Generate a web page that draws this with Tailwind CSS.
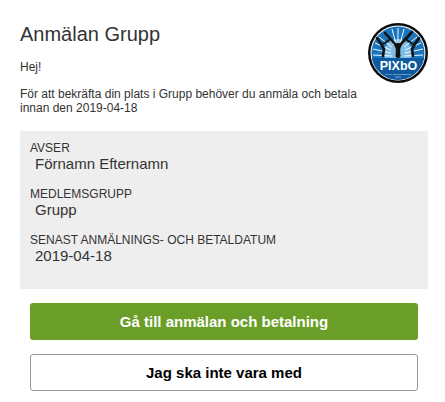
<!DOCTYPE html>
<html lang="en">
<head>
    <meta charset="UTF-8">
    <title>Anmälan Grupp</title>
    <script src="https://cdn.jsdelivr.net/npm/@tailwindcss/browser@4"></script>
</head>
<body class="bg-white font-['Liberation_Sans',Arial,sans-serif] text-[#333]">

<div class="pl-5 pr-[17px] pt-[20px] h-[402px] overflow-hidden">
    <div class="flex justify-between h-[111px]">
        <div>
            <h1 class="text-[20px] leading-[28px] font-normal">Anmälan Grupp</h1>
            <p class="text-[12px] leading-[14px] mt-[12px]">Hej!</p>
            <p class="text-[12px] leading-[14px] mt-[13px] w-[345px]">För att bekräfta din plats i Grupp behöver du anmäla och betala innan den 2019-04-18</p>
        </div>
        <svg class="w-[60px] h-[60px] mt-[3px] shrink-0" viewBox="0 0 60 60">
            <circle cx="30" cy="30" r="30" fill="#0c0c0c"/>
            <circle cx="30" cy="30" r="27.5" fill="#fff"/>
            <circle cx="30" cy="30" r="26.5" fill="#1b75bc"/>
            <circle cx="30" cy="30" r="14" fill="#7fbde6"/>
            <g stroke="#f2f9fd" stroke-width="1">
                <path d="M24 33 L5 32 M23 30 L5 26 M23 27 L7 20 M24 24 L11 14 M26 22 L17 9 M28 21 L24 6 M30 21 L30 5 M32 21 L36 6 M34 22 L43 9 M36 24 L49 14 M37 27 L53 20 M37 30 L55 26 M36 33 L55 32"/>
            </g>
            <path d="M3.9 35 H56.1 A26.5 26.5 0 0 1 3.9 35Z" fill="#0f5a9e"/>
            <g fill="none" stroke="#111" stroke-linecap="round" stroke-linejoin="round">
                <path d="M17 10 L27 21 L30 27 L33 21 L44 9" stroke-width="2.6"/>
                <path d="M30 22 L30 31" stroke-width="4.5"/>
                <path d="M9 15 L13 21 L16 26 L15 33" stroke-width="2.6"/>
                <path d="M21 17 L15 21" stroke-width="1.6"/>
                <path d="M51 15 L47 21 L44 26 L45 33" stroke-width="2.6"/>
                <path d="M39 17 L45 21" stroke-width="1.6"/>
            </g>
            <circle cx="30" cy="32.5" r="2.5" fill="#111"/>
            <text x="30.5" y="47" text-anchor="middle" fill="#fff" font-size="12.5" font-weight="700" font-family="Liberation Sans, sans-serif">PIXbO</text>
            <text x="30" y="52" text-anchor="middle" fill="#dbe9f5" font-size="2.4" font-family="Liberation Sans, sans-serif">GYMNASTIKFÖRENING</text>
            <rect x="27" y="53.3" width="6" height="1.4" fill="#5d93c4"/>
        </svg>
    </div>

    <div class="bg-[#eee] h-[158px] pl-[10px] pt-[10px]">
        <div class="h-[46px]">
            <div class="text-[12px] leading-[14px]">AVSER</div>
            <div class="text-[15px] leading-[18px] pl-[5px]">Förnamn Efternamn</div>
        </div>
        <div class="h-[46px]">
            <div class="text-[12px] leading-[14px]">MEDLEMSGRUPP</div>
            <div class="text-[15px] leading-[18px] pl-[5px]">Grupp</div>
        </div>
        <div>
            <div class="text-[12px] leading-[14px]">SENAST ANMÄLNINGS- OCH BETALDATUM</div>
            <div class="text-[15px] leading-[18px] pl-[5px]">2019-04-18</div>
        </div>
    </div>

    <div class="mx-[10px] mt-[14px] flex flex-col gap-[14px]">
        <button class="h-[37px] pt-[2px] bg-[#6a9e28] text-white text-[15px] font-bold rounded-[3px]">Gå till anmälan och betalning</button>
        <button class="h-[37px] pt-[2px] bg-white border border-[#999] text-black text-[15px] font-bold rounded-[3px]">Jag ska inte vara med</button>
    </div>
</div>

</body>
</html>
